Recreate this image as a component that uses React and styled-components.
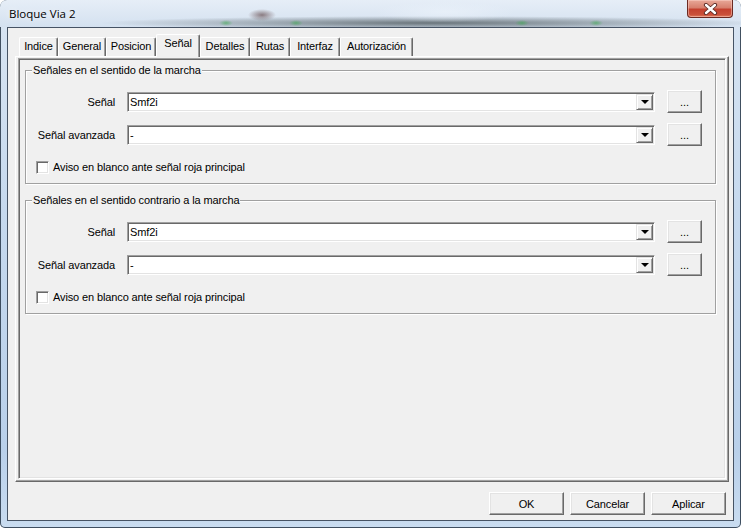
import styled, { createGlobalStyle } from "styled-components";

const TABS = [
  { label: "Indice", w: 39 },
  { label: "General", w: 48 },
  { label: "Posicion", w: 50 },
  { label: "Señal", w: 44, active: true },
  { label: "Detalles", w: 50 },
  { label: "Rutas", w: 40 },
  { label: "Interfaz", w: 50 },
  { label: "Autorización", w: 73 },
];

const GROUPS = [
  "Señales en el sentido de la marcha",
  "Señales en el sentido contrario a la marcha",
];

const GlobalStyle = createGlobalStyle`
  html, body { margin: 0; padding: 0; background: #ffffff; }
  body {
    font-family: "Liberation Sans", Arial, sans-serif;
    font-size: 11px;
    letter-spacing: -0.12px;
    color: #000;
  }
`;

const Window = styled.div`
  width: 741px;
  height: 528px;
  box-sizing: border-box;
  display: flex;
  flex-direction: column;
  overflow: hidden;
  border-radius: 7px 7px 5px 5px;
  background: linear-gradient(to bottom, #d9e5f2 0%, #c6d9ee 40%, #b9d0ea 85%, #c9dcf0 100%);
  box-shadow: inset 0 0 0 1px rgba(28, 42, 60, 0.8);
`;

const TitleBar = styled.div`
  height: 27px;
  flex: none;
  display: flex;
  align-items: flex-start;
  background:
    radial-gradient(ellipse 14px 6px at 262px 15px, rgba(70, 35, 35, 0.55), transparent),
    radial-gradient(ellipse 7px 3px at 226px 23px, rgba(60, 170, 80, 0.6), transparent),
    radial-gradient(ellipse 7px 3px at 296px 23px, rgba(60, 170, 80, 0.6), transparent),
    radial-gradient(ellipse 7px 3px at 522px 23px, rgba(60, 170, 80, 0.6), transparent),
    radial-gradient(ellipse 7px 3px at 596px 23px, rgba(60, 170, 80, 0.6), transparent),
    radial-gradient(ellipse 70px 10px at 445px 12px, rgba(235, 242, 250, 0.7), transparent),
    radial-gradient(ellipse 330px 7px at 430px 23px, rgba(40, 50, 52, 0.62), transparent),
    linear-gradient(to bottom, #e6eef7, #d4e1f0);
`;

const Title = styled.div`
  padding: 6px 0 0 9px;
  font-family: "Open Sans", "Liberation Sans", sans-serif;
  font-size: 11.5px;
  letter-spacing: 0;
  line-height: 15px;
  color: #000;
  text-shadow: 0 0 6px rgba(255, 255, 255, 0.9);
  flex: 1;
`;

const CloseButton = styled.div`
  width: 46px;
  height: 18px;
  margin-right: 8px;
  box-sizing: border-box;
  display: flex;
  align-items: center;
  justify-content: center;
  border: 1px solid #6b2a22;
  border-top: none;
  border-radius: 0 0 4px 4px;
  background: linear-gradient(to bottom, #e8a898 0%, #d7806e 45%, #c4412f 55%, #c9503a 85%, #e07a5c 100%);
  box-shadow: inset 0 0 0 1px rgba(255, 220, 210, 0.45);
`;

const Client = styled.div`
  flex: 1;
  margin: 0 7px 7px 7px;
  border: 1px solid rgba(40, 55, 75, 0.85);
  background: #f0f0f0;
  display: flex;
  flex-direction: column;
`;

const TabControl = styled.div`
  margin: 6px 0 0 7px;
  width: 714px;
  display: flex;
  flex-direction: column;
`;

const TabStrip = styled.div`
  height: 22px;
  padding-left: 4px;
  display: flex;
  align-items: flex-end;
`;

const Tab = styled.div`
  box-sizing: border-box;
  width: ${(p) => p.$w}px;
  height: ${(p) => (p.$active ? 23 : 19)}px;
  margin-bottom: ${(p) => (p.$active ? -1 : 0)}px;
  padding-top: 2px;
  position: relative;
  z-index: ${(p) => (p.$active ? 1 : 0)};
  text-align: center;
  line-height: 13px;
  white-space: nowrap;
  background: #f0f0f0;
  border-top: 1px solid #ffffff;
  border-left: 1px solid #ffffff;
  border-right: 1px solid #696969;
  border-radius: 2px 2px 0 0;
  box-shadow: inset -1px 0 #a0a0a0;
`;

const TabPage = styled.div`
  height: 426px;
  box-sizing: border-box;
  padding: 1px 2px 2px 2px;
  border-top: 1px solid #ffffff;
  border-left: 1px solid #ffffff;
  border-right: 1px solid #696969;
  border-bottom: 1px solid #696969;
  box-shadow: inset -1px -1px #a0a0a0;
  display: flex;
`;

const InnerPanel = styled.div`
  flex: 1;
  border: 1px solid;
  border-color: #a0a0a0 #ffffff #ffffff #a0a0a0;
  box-shadow: inset 1px 1px #696969, inset -1px -1px #e3e3e3;
  padding: 1px;
  display: flex;
  flex-direction: column;
`;

const Group = styled.div`
  margin: ${(p) => (p.$first ? 10 : 16)}px 8px 0 5px;
  border: 1px solid #a0a0a0;
  box-shadow: inset 1px 1px #ffffff, 1px 1px #ffffff;
  padding: 0 13px 9px 0;
  display: flex;
  flex-direction: column;
`;

const Legend = styled.div`
  align-self: flex-start;
  margin: -7px 0 0 6px;
  padding: 0 1px;
  height: 13px;
  line-height: 13px;
  background: #f0f0f0;
  white-space: nowrap;
`;

const Fields = styled.div`
  margin-top: 13px;
  display: grid;
  grid-template-columns: 89px 528px 35px;
  grid-auto-rows: 23px;
  column-gap: 12px;
  row-gap: 10px;
  align-items: center;
`;

const Label = styled.div`
  text-align: right;
  white-space: nowrap;
`;

const Combo = styled.div`
  height: 20px;
  box-sizing: border-box;
  display: flex;
  background: #ffffff;
  border: 1px solid;
  border-color: #a0a0a0 #ffffff #ffffff #a0a0a0;
  box-shadow: inset 1px 1px #696969, inset -1px -1px #e3e3e3;
  padding: 1px 1px 1px 2px;
`;

const ComboText = styled.div`
  flex: 1;
  line-height: 16px;
`;

const DropButton = styled.div`
  width: 17px;
  height: 16px;
  box-sizing: border-box;
  display: flex;
  align-items: center;
  justify-content: center;
  background: #f0f0f0;
  border: 1px solid;
  border-color: #e3e3e3 #696969 #696969 #e3e3e3;
  box-shadow: inset 1px 1px #ffffff, inset -1px -1px #a0a0a0;
`;

const Arrow = styled.div`
  width: 0;
  height: 0;
  border-left: 4px solid transparent;
  border-right: 4px solid transparent;
  border-top: 4px solid #000;
  margin-top: 1px;
`;

const PushButton = styled.button`
  width: ${(p) => p.$w}px;
  height: 23px;
  box-sizing: border-box;
  padding: 0;
  font-family: "Liberation Sans", Arial, sans-serif;
  font-size: 11px;
  letter-spacing: -0.12px;
  color: #000;
  background: #f0f0f0;
  border: 1px solid;
  border-color: #ffffff #696969 #696969 #ffffff;
  box-shadow: inset -1px -1px #a0a0a0, inset 1px 1px #e3e3e3;
`;

const CheckRow = styled.div`
  margin: 15px 0 0 10px;
  height: 13px;
  display: flex;
  align-items: center;
  gap: 4px;
  line-height: 13px;
`;

const CheckBox = styled.div`
  width: 13px;
  height: 13px;
  box-sizing: border-box;
  background: #ffffff;
  border: 1px solid;
  border-color: #a0a0a0 #ffffff #ffffff #a0a0a0;
  box-shadow: inset 1px 1px #696969, inset -1px -1px #e3e3e3;
`;

const ButtonRow = styled.div`
  margin: 10px 7px 0 0;
  display: flex;
  justify-content: flex-end;
  gap: 6px;
`;

const CloseGlyph = () => (
  <svg width="15" height="12" viewBox="0 0 15 12">
    <path d="M3 2 L12 10 M12 2 L3 10" stroke="#5a2a25" strokeWidth="4.2" strokeLinecap="round" />
    <path d="M3 2 L12 10 M12 2 L3 10" stroke="#ffffff" strokeWidth="2.4" strokeLinecap="round" />
  </svg>
);

const SignalGroup = ({ title, first }) => (
  <Group $first={first}>
    <Legend>{title}</Legend>
    <Fields>
      <Label>Señal</Label>
      <Combo>
        <ComboText>Smf2i</ComboText>
        <DropButton><Arrow /></DropButton>
      </Combo>
      <PushButton $w={35}>...</PushButton>
      <Label>Señal avanzada</Label>
      <Combo>
        <ComboText>-</ComboText>
        <DropButton><Arrow /></DropButton>
      </Combo>
      <PushButton $w={35}>...</PushButton>
    </Fields>
    <CheckRow>
      <CheckBox />
      <span>Aviso en blanco ante señal roja principal</span>
    </CheckRow>
  </Group>
);

export default function App() {
  return (
    <>
      <GlobalStyle />
      <Window>
        <TitleBar>
          <Title>Bloque Via 2</Title>
          <CloseButton><CloseGlyph /></CloseButton>
        </TitleBar>
        <Client>
          <TabControl>
            <TabStrip>
              {TABS.map((t) => (
                <Tab key={t.label} $w={t.w} $active={t.active}>{t.label}</Tab>
              ))}
            </TabStrip>
            <TabPage>
              <InnerPanel>
                {GROUPS.map((g, i) => (
                  <SignalGroup key={g} title={g} first={i === 0} />
                ))}
              </InnerPanel>
            </TabPage>
          </TabControl>
          <ButtonRow>
            <PushButton $w={75}>OK</PushButton>
            <PushButton $w={75}>Cancelar</PushButton>
            <PushButton $w={75}>Aplicar</PushButton>
          </ButtonRow>
        </Client>
      </Window>
    </>
  );
}
